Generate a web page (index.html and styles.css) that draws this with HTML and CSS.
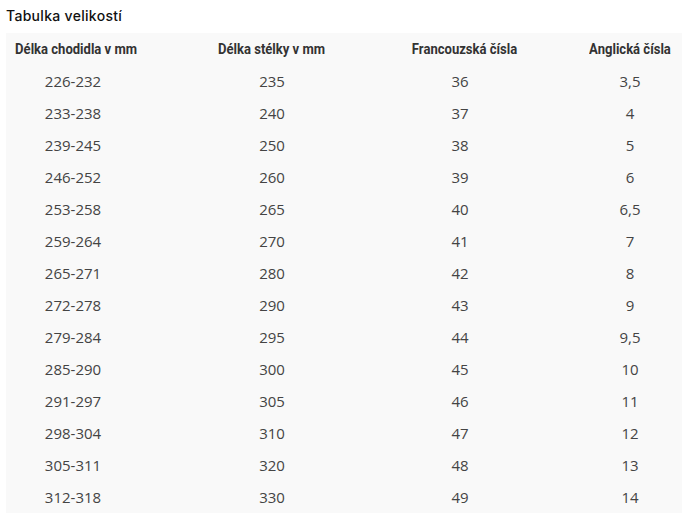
FILE: index.html
```html
<!DOCTYPE html>
<html lang="cs">
<head>
<meta charset="utf-8">
<title>Tabulka velikostí</title>
<link rel="stylesheet" href="styles.css">
</head>
<body>
<h2 class="title">Tabulka velikostí</h2>
<table class="sizes">
  <colgroup>
    <col class="c1"><col class="c2"><col class="c3"><col class="c4">
  </colgroup>
  <thead>
    <tr>
      <th><span class="hd">Délka chodidla v mm</span></th>
      <th><span class="hd">Délka stélky v mm</span></th>
      <th><span class="hd">Francouzská čísla</span></th>
      <th class="last"><span class="hd">Anglická čísla</span></th>
    </tr>
  </thead>
  <tbody>
    <tr><td>226-232</td><td>235</td><td>36</td><td class="last">3,5</td></tr>
    <tr><td>233-238</td><td>240</td><td>37</td><td class="last">4</td></tr>
    <tr><td>239-245</td><td>250</td><td>38</td><td class="last">5</td></tr>
    <tr><td>246-252</td><td>260</td><td>39</td><td class="last">6</td></tr>
    <tr><td>253-258</td><td>265</td><td>40</td><td class="last">6,5</td></tr>
    <tr><td>259-264</td><td>270</td><td>41</td><td class="last">7</td></tr>
    <tr><td>265-271</td><td>280</td><td>42</td><td class="last">8</td></tr>
    <tr><td>272-278</td><td>290</td><td>43</td><td class="last">9</td></tr>
    <tr><td>279-284</td><td>295</td><td>44</td><td class="last">9,5</td></tr>
    <tr><td>285-290</td><td>300</td><td>45</td><td class="last">10</td></tr>
    <tr><td>291-297</td><td>305</td><td>46</td><td class="last">11</td></tr>
    <tr><td>298-304</td><td>310</td><td>47</td><td class="last">12</td></tr>
    <tr><td>305-311</td><td>320</td><td>48</td><td class="last">13</td></tr>
    <tr><td>312-318</td><td>330</td><td>49</td><td class="last">14</td></tr>
  </tbody>
</table>
</body>
</html>
```

FILE: styles.css
```css
html, body {
  margin: 0;
  padding: 0;
  background: #ffffff;
}

body {
  padding: 6px 4px 0 6px;
  font-family: "Open Sans", "Liberation Sans", sans-serif;
  color: #444444;
}

.title {
  margin: 0;
  height: 27px;
  font-family: "Inter", "Lato", sans-serif;
  font-size: 14px;
  font-weight: 500;
  line-height: 20px;
  letter-spacing: 0.3px;
  color: #111111;
}

.sizes {
  width: 676px;
  table-layout: fixed;
  border-collapse: collapse;
  background: #f9f9f9;
}

.c1 { width: 134px; }
.c2 { width: 264px; }
.c3 { width: 112px; }
.c4 { width: 166px; }

.sizes th,
.sizes td {
  height: 32px;
  padding: 0;
  text-align: center;
  vertical-align: middle;
  white-space: nowrap;
}

.sizes th {
  font-family: "Roboto", "Liberation Sans", sans-serif;
  font-weight: 700;
  font-size: 15px;
  color: #333333;
}

.hd {
  display: inline-block;
  transform: scaleX(0.87);
}

.sizes td {
  font-size: 15px;
  color: #444444;
}

.sizes .last {
  padding-left: 62px;
}
```
